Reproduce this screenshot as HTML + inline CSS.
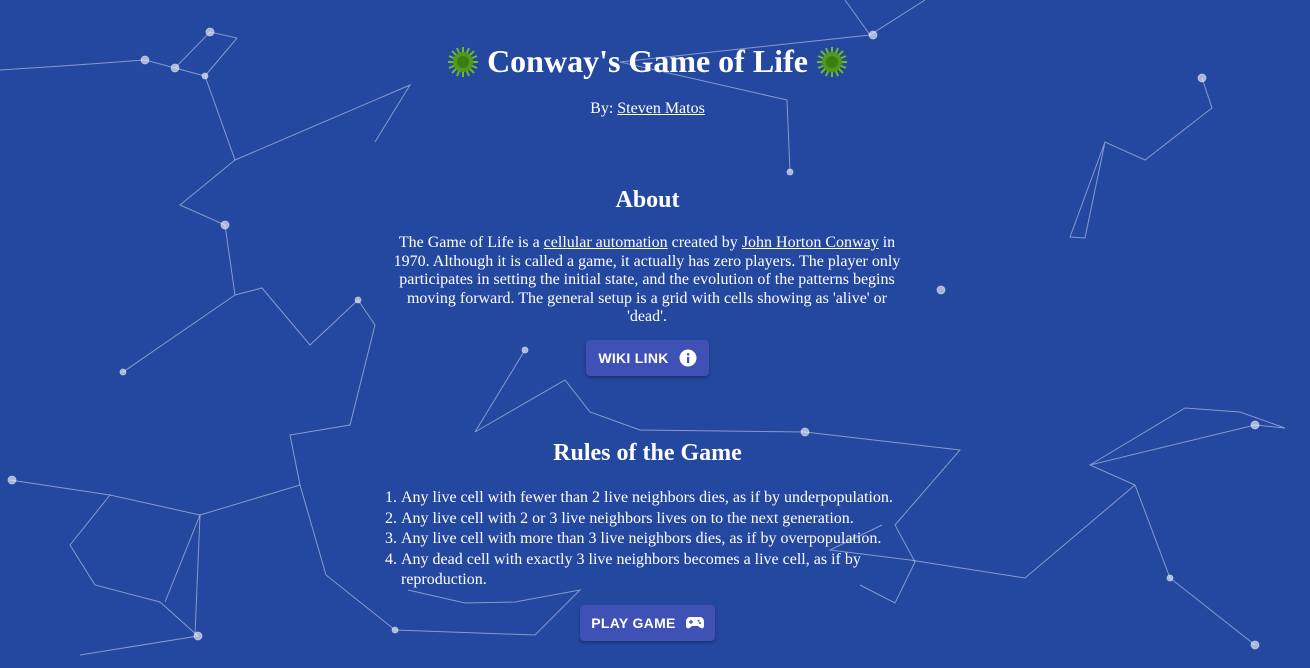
<!DOCTYPE html>
<html><head><meta charset="utf-8"><style>
html,body{margin:0;padding:0;width:1310px;height:668px;overflow:hidden;background:#2447a0;font-family:"Liberation Serif",serif;color:#fff}
svg.bg{position:absolute;left:0;top:0}
.c{position:absolute;left:0;width:1295px;text-align:center}
h1{position:absolute;left:0;width:1295px;text-align:center;top:42px;margin:0;font-size:32px;font-weight:bold;line-height:38px}
.by{top:100px;font-size:16px}
a{color:#fff;text-decoration:underline}
h2{position:absolute;left:0;width:1295px;text-align:center;margin:0;font-size:24px;font-weight:bold}
.p{position:absolute;left:389px;width:516px;top:234px;text-align:center;font-size:16px;line-height:18.5px}
.btn{position:absolute;background:#3f51b5;border-radius:4px;box-shadow:0 2px 3px rgba(0,0,0,.3);font-family:"Liberation Sans",sans-serif;font-weight:bold;font-size:14px;letter-spacing:.3px;display:flex;align-items:center;justify-content:center;gap:10px}
ol{position:absolute;left:381px;top:488px;margin:0;padding-left:20px;width:500px;font-size:16px;line-height:20.5px}
.v{display:inline-block;vertical-align:-6px}
</style></head><body>
<svg class="bg" width="1310" height="668" stroke="rgba(255,255,255,0.45)" stroke-width="1" fill="rgba(255,255,255,0.6)">
<g fill="none">
<polyline points="0,70 62,66 145,60 175,68 210,32 237,38 205,76 175,68"/>
<polyline points="205,76 235,160 180,205 225,225 235,295 262,288 310,345 358,300 375,325 350,425 290,435 300,485 326,575 395,630"/>
<polyline points="235,160 410,85 375,142"/>
<polyline points="10,480 110,495 70,545 95,585 160,602 198,636 80,655"/>
<polyline points="110,495 200,515 165,602"/>
<polyline points="300,485 200,515 195,635"/>
<polyline points="525,350 475,432 565,380 590,412 640,430 805,432 960,450 895,525 915,562 895,603 860,585"/>
<polyline points="408,590 465,603 515,602 580,590 535,635 395,630"/>
<polyline points="1090,465 1185,408 1240,412 1285,428 1255,425 1090,465 1135,485 1170,578 1255,645"/>
<polyline points="1135,485 1025,578 910,560 830,550 882,525"/>
<polyline points="1202,78 1212,108 1145,160 1105,142 1070,237 1085,238 1105,142"/>
<polyline points="787,100 790,172 787,100 620,62 870,35 925,0"/>
<polyline points="870,35 845,0"/>
<polyline points="123,372 235,295"/>
</g>
<circle cx="210" cy="32" r="4"/><circle cx="145" cy="60" r="4"/><circle cx="175" cy="68" r="4"/><circle cx="205" cy="76" r="3"/>
<circle cx="225" cy="225" r="4"/><circle cx="358" cy="300" r="3"/><circle cx="805" cy="432" r="4"/><circle cx="941" cy="290" r="4"/>
<circle cx="790" cy="172" r="3"/><circle cx="873" cy="35" r="4"/><circle cx="1202" cy="78" r="4"/><circle cx="1255" cy="425" r="4"/>
<circle cx="1255" cy="645" r="4"/><circle cx="12" cy="480" r="4"/><circle cx="198" cy="636" r="4"/><circle cx="1170" cy="578" r="3"/>
<circle cx="525" cy="350" r="3"/><circle cx="395" cy="630" r="3"/><circle cx="123" cy="372" r="3"/>
</svg>
<h1><svg class="v" width="32" height="32" viewBox="0 0 32 32"><g stroke="#6fb82a" stroke-width="2"><path d="M16 1v30M1 16h30M5 5l22 22M27 5L5 27M10 2l12 28M22 2L10 30M2 10l28 12M2 22l28-12"/></g><circle cx="16" cy="16" r="10" fill="#4f9a18"/><circle cx="16" cy="16" r="6" fill="#3b7d10"/></svg> Conway's Game of Life <svg class="v" width="32" height="32" viewBox="0 0 32 32"><g stroke="#6fb82a" stroke-width="2"><path d="M16 1v30M1 16h30M5 5l22 22M27 5L5 27M10 2l12 28M22 2L10 30M2 10l28 12M2 22l28-12"/></g><circle cx="16" cy="16" r="10" fill="#4f9a18"/><circle cx="16" cy="16" r="6" fill="#3b7d10"/></svg></h1>
<div class="c by">By: <a>Steven Matos</a></div>
<h2 style="top:187px">About</h2>
<div class="p">The Game of Life is a <a>cellular automation</a> created by <a>John Horton Conway</a> in 1970. Although it is called a game, it actually has zero players. The player only participates in setting the initial state, and the evolution of the patterns begins moving forward. The general setup is a grid with cells showing as 'alive' or 'dead'.</div>
<div class="btn" style="left:586px;top:340px;width:123px;height:36px">WIKI LINK <svg width="18" height="18" viewBox="0 0 18 18"><circle cx="9" cy="9" r="8.5" fill="#fff"/><rect x="8" y="8" width="2.2" height="6" fill="#3f51b5"/><circle cx="9.1" cy="5.3" r="1.3" fill="#3f51b5"/></svg></div>
<h2 style="top:440px">Rules of the Game</h2>
<ol>
<li>Any live cell with fewer than 2 live neighbors dies, as if by underpopulation.</li>
<li>Any live cell with 2 or 3 live neighbors lives on to the next generation.</li>
<li>Any live cell with more than 3 live neighbors dies, as if by overpopulation.</li>
<li>Any dead cell with exactly 3 live neighbors becomes a live cell, as if by reproduction.</li>
</ol>
<div class="btn" style="left:580px;top:605px;width:135px;height:36px">PLAY GAME <svg width="18" height="14" viewBox="0 0 18 14"><path d="M4 1h10c2 0 3.5 1.5 4 4l0 5c0 2-2 3-3.5 2L12 10H6l-2.5 2C2 13 0 12 0 10V5C.5 2.5 2 1 4 1z" fill="#fff"/><rect x="3" y="5.2" width="4" height="1.4" fill="#3f51b5"/><rect x="4.3" y="3.9" width="1.4" height="4" fill="#3f51b5"/><circle cx="12.5" cy="4.8" r="1" fill="#3f51b5"/><circle cx="14" cy="7" r="1" fill="#3f51b5"/></svg></div>
</body></html>
